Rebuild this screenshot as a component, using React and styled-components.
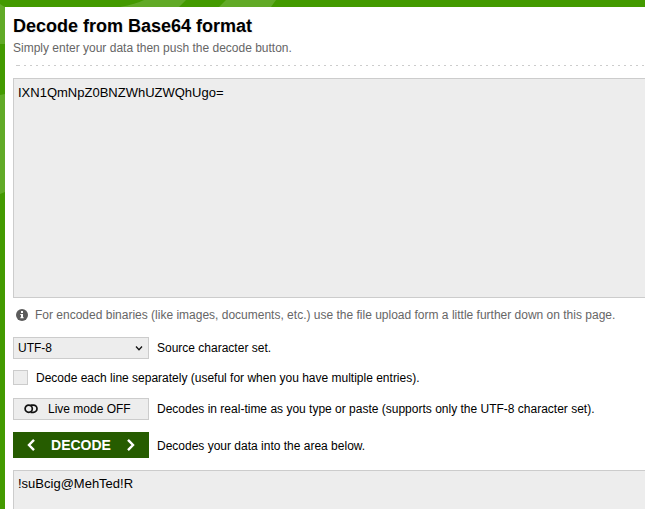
import React from 'react';
import styled, { createGlobalStyle } from 'styled-components';

const Global = createGlobalStyle`
  * { box-sizing: border-box; }
  body { margin: 0; overflow: hidden; background: #439a00; font: 12px/16px "Liberation Sans", Arial, sans-serif; color: #000; }
`;
const Page = styled.div`
  position: relative;
  height: 509px;
  width: 645px;
  padding: 7px 0 0 5px;
  overflow: hidden;
`;
const Backdrop = styled.svg`
  position: absolute;
  inset: 0;
  z-index: -1;
`;
const Main = styled.main`
  height: 502px;
  padding: 8px 0 0 8px;
  background: #fff;
  overflow: hidden;
`;
const Title = styled.h1`
  margin: 0;
  font-size: 18px;
  line-height: 22px;
  text-shadow: 1px 1px 0 #eee;
`;
const Subtitle = styled.p`
  margin: 3px 0 0;
  color: #666;
`;
const Divider = styled.div`
  height: 1px;
  margin: 9px 0 12px;
  background: repeating-linear-gradient(90deg, #ccc 0 2px, transparent 2px 6px) 5px 0;
`;
const DataBox = styled.textarea`
  display: block;
  width: 660px;
  height: ${(p) => p.$height}px;
  padding: ${(p) => p.$top}px 4px 5px;
  border: 1px solid #ccc;
  border-radius: 0;
  outline: 0;
  resize: none;
  background: #ededed;
  color: #000;
  font: 13px/17px "Liberation Sans", Arial, sans-serif;
`;
const Note = styled.p`
  display: flex;
  align-items: center;
  gap: 7px;
  margin: 9px 0 14px;
  padding-left: 3px;
  color: #666;
`;
const Row = styled.div`
  display: flex;
  align-items: center;
  gap: 8px;
  height: ${(p) => p.$height}px;
  margin-bottom: ${(p) => p.$gap}px;
  white-space: nowrap;
`;
const Select = styled.button`
  display: flex;
  align-items: center;
  justify-content: space-between;
  width: 136px;
  height: 22px;
  padding: 0 5px 0 4px;
  border: 1px solid #ccc;
  background: #ededed;
  color: #000;
  font: inherit;
`;
const Toggle = styled(Select)`
  justify-content: flex-start;
  gap: 10px;
  padding: 0 10px;
`;
const Checkbox = styled.input`
  appearance: none;
  width: 15px;
  height: 15px;
  margin: 0;
  border: 1px solid #ccc;
  background: #ededed;
`;
const Decode = styled.button`
  display: flex;
  align-items: center;
  justify-content: space-between;
  width: 136px;
  height: 26px;
  padding: 0 14px;
  border: 0;
  background: #265c00;
  color: #fff;
  font: bold 14px/16px "Liberation Sans", Arial, sans-serif;
`;
const Label = styled.span`
  padding-top: ${(p) => p.$drop || 0}px;
`;

const Chevron = ({ right }) => (
  <svg width="8" height="12" viewBox="0 0 8 12" fill="none" stroke="#fff" strokeWidth="2.4">
    <path d={right ? 'M1 .9L6 6L1 11.1' : 'M7 .9L2 6L7 11.1'} />
  </svg>
);

export default function App() {
  return (
    <Page>
      <Global />
      <Backdrop width="645" height="509" fill="#61aa27">
        <path d="M0 4Q3 6 5 7V44H0Z" />
        <path d="M120 7Q136 4 144 0H186L179 7Z" />
        <path d="M219 7L226 0H276L271 7Z" />
        <path d="M0 95L5 94V192L0 194Z" />
      </Backdrop>
      <Main>
        <Title>Decode from Base64 format</Title>
        <Subtitle>Simply enter your data then push the decode button.</Subtitle>
        <Divider />
        <DataBox $height={220} $top={5} defaultValue="IXN1QmNpZ0BNZWhUZWQhUgo=" spellCheck={false} />
        <Note>
          <svg width="12" height="12" viewBox="0 0 12 12">
            <circle cx="6" cy="6" r="6" fill="#5c5c5c" />
            <path d="M5 2h2v2H5zM4.3 5H7v3.2h.7v1H4.3v-1H5V6h-.7z" fill="#fff" />
          </svg>
          <span>For encoded binaries (like images, documents, etc.) use the file upload form a little further down on this page.</span>
        </Note>
        <Row $height={22} $gap={11}>
          <Select>
            UTF-8
            <svg width="8" height="6" viewBox="0 0 8 6" fill="none" stroke="#111" strokeWidth="1.3"><path d="M1 1.5L4 4.7L7 1.5" /></svg>
          </Select>
          <Label>Source character set.</Label>
        </Row>
        <Row $height={15} $gap={13}>
          <Checkbox type="checkbox" />
          <Label>Decode each line separately (useful for when you have multiple entries).</Label>
        </Row>
        <Row $height={22} $gap={12}>
          <Toggle>
            <svg width="14" height="10" viewBox="0 0 14 10" fill="none" stroke="#111" strokeWidth="1.7">
              <circle cx="4.7" cy="4.7" r="3.6" />
              <path d="M6.6 1.1H9.4A3.6 3.6 0 0 1 9.4 8.3H6.6" />
            </svg>
            Live mode OFF
          </Toggle>
          <Label>Decodes in real-time as you type or paste (supports only the UTF-8 character set).</Label>
        </Row>
        <Row $height={26} $gap={12}>
          <Decode><Chevron />DECODE<Chevron right /></Decode>
          <Label $drop={2}>Decodes your data into the area below.</Label>
        </Row>
        <DataBox $height={220} $top={4} defaultValue="!suBcig@MehTed!R" spellCheck={false} />
      </Main>
    </Page>
  );
}
